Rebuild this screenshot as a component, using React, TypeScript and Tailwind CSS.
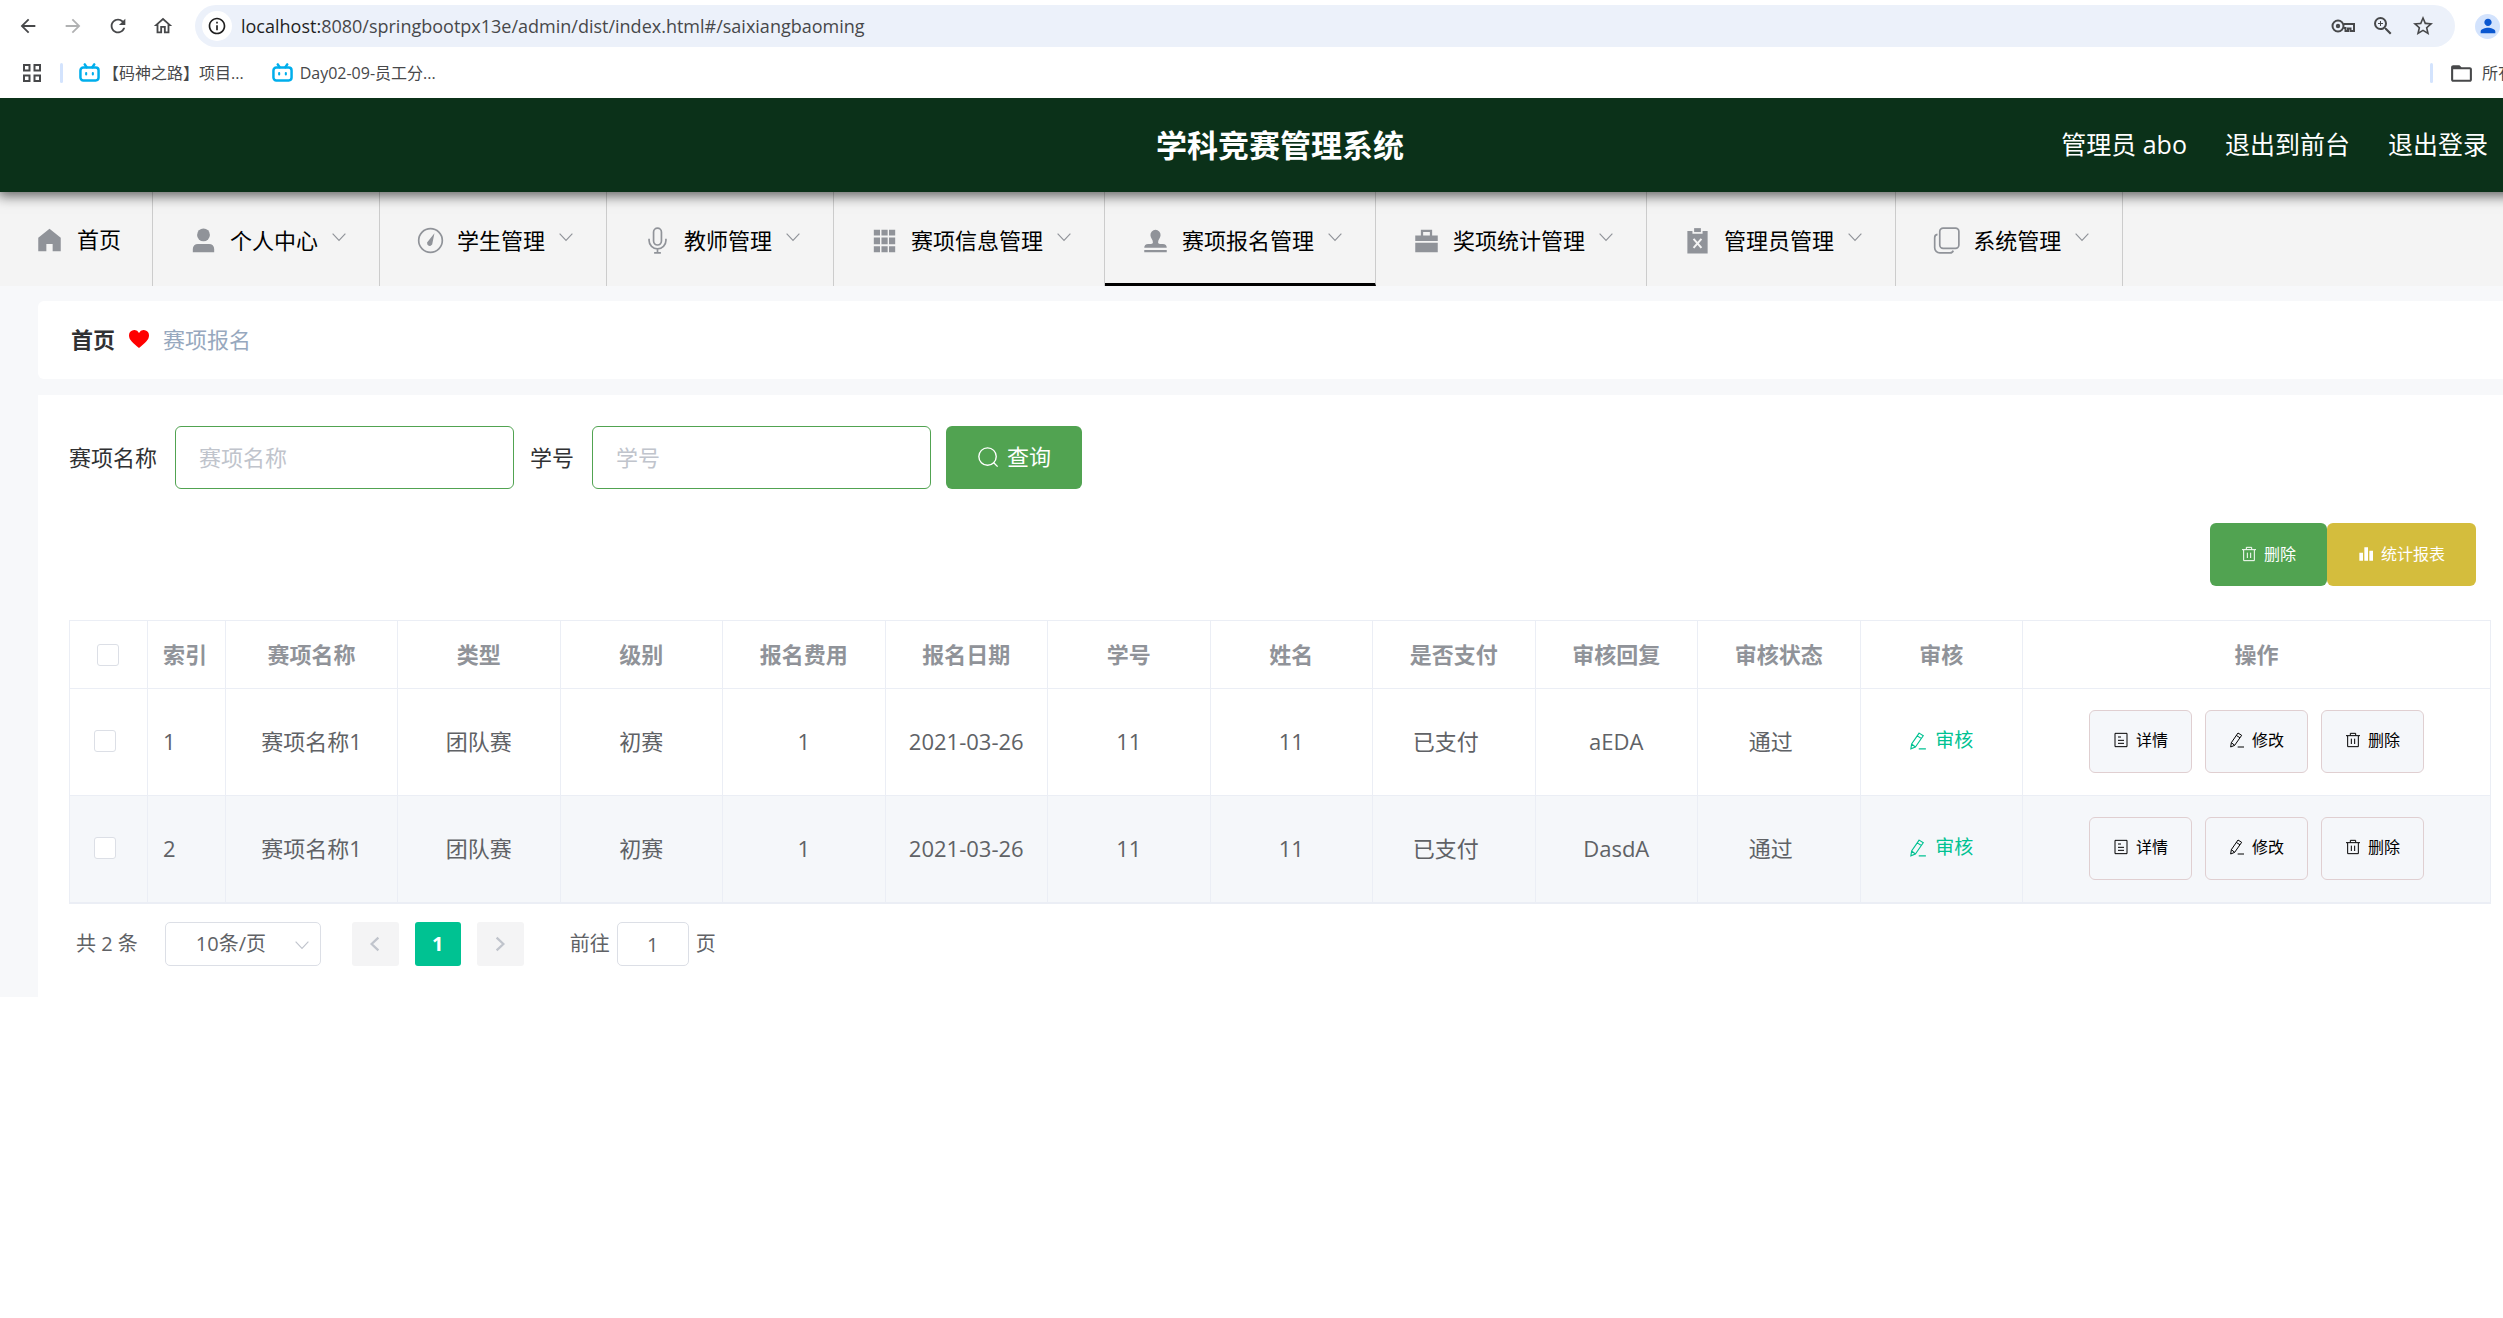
import { useState } from "react";
import type { ReactNode } from "react";
import {
  MdArrowBack,
  MdArrowForward,
  MdFolderOpen,
  MdInfoOutline,
  MdOutlineHome,
  MdPerson,
  MdRefresh,
  MdStarBorder,
  MdZoomIn,
} from "react-icons/md";

type IconProps = { className?: string };

function Icon({ className, children }: { className?: string; children: ReactNode }) {
  return (
    <svg viewBox="0 0 24 24" className={className} fill="none" stroke="currentColor" strokeWidth="1.5" aria-hidden="true">
      {children}
    </svg>
  );
}

function HomeIcon({ className }: IconProps) {
  return (
    <Icon className={className}>
      <path d="M12 2.500 2 10.500V22.500H9.200V16h5.600v6.500H22V10.500Z" fill="currentColor" stroke="none" />
    </Icon>
  );
}

function UserIcon({ className }: IconProps) {
  return (
    <Icon className={className}>
      <circle cx="12" cy="7" r="5.700" fill="currentColor" stroke="none" />
      <path d="M2.500 22.500v-3a4.500 4.500 0 0 1 4.500-4.500h10a4.500 4.500 0 0 1 4.500 4.500v3Z" fill="currentColor" stroke="none" />
    </Icon>
  );
}

function CompassIcon({ className }: IconProps) {
  return (
    <Icon className={className}>
      <circle cx="12" cy="12" r="10.500" />
      <path d="M15.500 5.500 13.800 14a2.500 2.500 0 0 1-4.600 1.600 2.500 2.500 0 0 1 .8-3.100Z" fill="currentColor" stroke="none" />
    </Icon>
  );
}

function MicIcon({ className }: IconProps) {
  return (
    <Icon className={className}>
      <rect x="8.500" y="1" width="7" height="15" rx="3.500" />
      <path d="M4.500 10.500v1.500a7.500 7.500 0 0 0 15 0v-1.500M12 19.500v3.500M9 23h6" />
    </Icon>
  );
}

function GridIcon({ className }: IconProps) {
  return (
    <Icon className={className}>
      <path
        d="M2.500 2.500h5.500v5H2.500zM9.300 2.500h5.500v5H9.300zM16 2.500h5.500v5H16zM2.500 9.300h5.500v6H2.500zM9.300 9.300h5.500v6H9.300zM16 9.300h5.500v6H16zM2.500 17h5.500v5.500H2.500zM9.300 17h5.500v5.500H9.300zM16 17h5.500v5.500H16z"
        fill="currentColor"
        stroke="none"
      />
    </Icon>
  );
}

function StampIcon({ className }: IconProps) {
  return (
    <Icon className={className}>
      <path
        d="M12 2.500a4.500 4.500 0 0 1 4.500 4.800c0 2.400-2.200 3.700-2.200 6.200 0 1 .7 1.500 1.700 1.500h2.500a3.500 3.500 0 0 1 3.500 3.500H2a3.500 3.500 0 0 1 3.500-3.500H8c1 0 1.700-.5 1.700-1.500 0-2.500-2.200-3.800-2.200-6.200A4.500 4.500 0 0 1 12 2.500ZM2 20.500h20v2H2z"
        fill="currentColor"
        stroke="none"
      />
    </Icon>
  );
}

function BriefcaseIcon({ className }: IconProps) {
  return (
    <Icon className={className}>
      <path
        d="M7 2.500h10v5h5v5H2v-5h5Zm2 2v3h6v-3ZM2 14h20v8.500H2z"
        fill="currentColor"
        fillRule="evenodd"
        stroke="none"
      />
    </Icon>
  );
}

function ClaimIcon({ className }: IconProps) {
  return (
    <Icon className={className}>
      <path d="M3 3.500h4.500v2.500h9V3.500H21v20H3z" fill="currentColor" stroke="none" />
      <path d="M9 1h6v3.500H9z" fill="currentColor" stroke="none" />
      <path d="m8.500 10.500 7 8m0-8-7 8" stroke="#f4f4f4" strokeWidth="1.800" />
    </Icon>
  );
}

function CopyIcon({ className }: IconProps) {
  return (
    <Icon className={className}>
      <rect x="6" y="1" width="17" height="18" rx="3" />
      <path d="M4 6.500A3 3 0 0 0 1.500 9.500v9A4.500 4.500 0 0 0 6 23h9a3 3 0 0 0 3-2" />
    </Icon>
  );
}

function ChevronDown({ className }: IconProps) {
  return (
    <Icon className={className}>
      <path d="m3.500 7.500 8.500 9 8.500-9" />
    </Icon>
  );
}

function TrashIcon({ className }: IconProps) {
  return (
    <Icon className={className}>
      <path d="M1.500 5.500h21M8 5V2h8v3M4 6v16h16V6M9.500 10v8M14.500 10v8" />
    </Icon>
  );
}

function PencilIcon({ className }: IconProps) {
  return (
    <Icon className={className}>
      <path d="m13.500 1.500 5.500 3.500L8.500 20 2.500 22.500 3.500 16ZM11 5.200l5.500 3.500M3.500 16l5 4M13 22.500h9.500" />
    </Icon>
  );
}

function DocIcon({ className }: IconProps) {
  return (
    <Icon className={className}>
      <path d="M3 2h18v20H3zM7.500 7.500H12M7.500 12.500h9M7.500 17h9" />
    </Icon>
  );
}

function SearchIcon({ className }: IconProps) {
  return (
    <Icon className={className}>
      <circle cx="11.500" cy="11.500" r="9.500" />
      <path d="m18 18 4.500 4.500" />
    </Icon>
  );
}

function ChartIcon({ className }: IconProps) {
  return (
    <Icon className={className}>
      <path d="M2 10h5.500v12H2zM9.500 2H15v20H9.500zM17 7h5.500v15H17z" fill="currentColor" stroke="none" />
    </Icon>
  );
}

function KeyIcon({ className }: IconProps) {
  return (
    <svg viewBox="0 0 24 14" className={className} fill="none" stroke="currentColor" strokeWidth="2" aria-hidden="true">
      <path d="M12.500 5H23v7h-3.500V9.500H17V12h-2.500V9h-2" />
      <circle cx="7" cy="7" r="5.500" />
      <circle cx="7" cy="7" r="2.200" fill="currentColor" stroke="none" />
    </svg>
  );
}

function TvIcon({ className }: IconProps) {
  return (
    <svg viewBox="0 0 22 20" className={className} fill="none" stroke="#00aeec" strokeWidth="2.600" strokeLinecap="round" aria-hidden="true">
      <path d="m6 1.500 2 3M16 1.500l-2 3" />
      <rect x="1.500" y="4.800" width="19" height="13.500" rx="3" />
      <path d="M7.500 10.500v1.500M14.500 10.500v1.500" strokeWidth="2.200" />
    </svg>
  );
}

function AppsIcon({ className }: IconProps) {
  return (
    <svg viewBox="0 0 18 18" className={className} fill="none" stroke="currentColor" strokeWidth="2" aria-hidden="true">
      <path d="M1 1h5.500v5.500H1zM11.500 1H17v5.500h-5.500zM1 11.500h5.500V17H1zM11.500 11.500H17V17h-5.500z" />
    </svg>
  );
}

const MENU = [
  { label: "个人中心", icon: UserIcon },
  { label: "学生管理", icon: CompassIcon },
  { label: "教师管理", icon: MicIcon },
  { label: "赛项信息管理", icon: GridIcon },
  { label: "赛项报名管理", icon: StampIcon, active: true },
  { label: "奖项统计管理", icon: BriefcaseIcon },
  { label: "管理员管理", icon: ClaimIcon },
  { label: "系统管理", icon: CopyIcon },
];

const COLUMNS = ["赛项名称", "类型", "级别", "报名费用", "报名日期", "学号", "姓名", "是否支付", "审核回复", "审核状态", "审核", "操作"];

const ROWS = [
  { id: 1, name: "赛项名称1", type: "团队赛", level: "初赛", fee: "1", date: "2021-03-26", no: "11", student: "11", paid: "已支付", reply: "aEDA", state: "通过" },
  { id: 2, name: "赛项名称1", type: "团队赛", level: "初赛", fee: "1", date: "2021-03-26", no: "11", student: "11", paid: "已支付", reply: "DasdA", state: "通过" },
];

const CHECKBOX =
  "block size-[22px] appearance-none rounded-[3px] border border-[#dcdfe6] bg-white checked:border-[#00c292] checked:bg-[#00c292]";

function BrowserBar() {
  return (
    <div className="relative z-10 h-[98px] bg-white text-[#47484a]">
      <div className="flex h-[52px] items-center pr-[60px] pl-[17px]">
        <nav className="flex gap-[23px]">
          <button aria-label="后退"><MdArrowBack className="size-[22px]" /></button>
          <button aria-label="前进" className="text-[#b0b1b2]"><MdArrowForward className="size-[22px]" /></button>
          <button aria-label="刷新"><MdRefresh className="size-[22px]" /></button>
          <button aria-label="主页"><MdOutlineHome className="size-[22px]" /></button>
        </nav>
        <div className="ml-[21px] flex h-[42px] flex-1 items-center rounded-full bg-[#ecf1fa] pr-5 pl-[7px]">
          <span className="flex size-[30px] items-center justify-center rounded-full bg-white">
            <MdInfoOutline className="size-5 text-[#1f1f1f]" />
          </span>
          <p className="ml-[9px] text-[18px] whitespace-nowrap">
            <span className="text-[#1f1f1f]">localhost:</span>8080/springbootpx13e/admin/dist/index.html#/saixiangbaoming
          </p>
          <div className="ml-auto flex items-center gap-4">
            <KeyIcon className="w-6" />
            <MdZoomIn className="size-6" />
            <MdStarBorder className="size-6" />
          </div>
        </div>
        <span className="ml-5 flex size-[25px] items-center justify-center rounded-full bg-[#d3e3fd] text-[#0b57d0]">
          <MdPerson className="size-[22px]" />
        </span>
      </div>
      <div className="flex h-[42px] items-center pl-[23px] text-base">
        <AppsIcon className="size-[18px]" />
        <span className="ml-[19px] h-5 w-[3px] rounded bg-[#d3e3fd]" />
        <a href="#mashen" className="ml-4 flex items-center">
          <TvIcon className="w-[21px]" />
          <span className="ml-[3px]">【码神之路】项目...</span>
        </a>
        <a href="#day02" className="ml-7 flex items-center gap-[7px]">
          <TvIcon className="w-[21px]" />
          Day02-09-员工分...
        </a>
        <div className="ml-auto flex items-center pr-[14px]">
          <span className="h-5 w-[3px] rounded bg-[#d3e3fd]" />
          <MdFolderOpen className="ml-4 size-[25px]" />
          <span className="ml-2">所有书签</span>
        </div>
      </div>
    </div>
  );
}

function MainMenu() {
  return (
    <nav className="flex h-[94px] bg-[#f4f4f4] text-[22px] text-black">
      <a href="#home" className="flex items-center border-r border-[#ccc] px-[31px]">
        <HomeIcon className="mr-3.5 ml-[5px] size-[27px] text-[#909399]" />
        首页
      </a>
      {MENU.map(({ label, icon: MenuIcon, active }) => (
        <a
          key={label}
          href={`#${label}`}
          className={`flex items-center border-r border-r-[#ccc] px-[31px] pt-0.5 ${active ? "border-b-3 border-b-black pt-[5px]" : ""}`}
        >
          <MenuIcon className="mr-[13px] ml-[6px] size-[27px] text-[#909399]" />
          {label}
          <ChevronDown className="mb-1.5 ml-3 size-[18px] text-[#909399]" />
        </a>
      ))}
    </nav>
  );
}

function ActionButton({ icon, label }: { icon: ReactNode; label: string }) {
  return (
    <button className="flex h-[63px] items-center gap-[7px] rounded-md border border-[#e0cfd1] bg-[#f5f7fa] px-[23px] pb-0.5 text-base text-black">
      {icon}
      {label}
    </button>
  );
}

function EntryTable() {
  return (
    <table className="w-full table-fixed border-separate border-spacing-0 border-t border-b border-l border-[#ebeef5] text-[22px] text-[#606266]">
      <colgroup>
        <col className="w-[78px]" />
        <col className="w-[78px]" />
        <col className="w-[172px]" />
        {COLUMNS.slice(1, -1).map((c) => <col key={c} />)}
        <col className="w-[468px]" />
      </colgroup>
      <thead>
        <tr className="h-[68px] text-[#909399] *:border-r *:border-b *:border-[#ebeef5]">
          <th className="pl-[27px]">
            <input type="checkbox" aria-label="全选" className={CHECKBOX} />
          </th>
          <th className="pl-[15px] text-left">索引</th>
          {COLUMNS.map((c) => <th key={c}>{c}</th>)}
        </tr>
      </thead>
      <tbody>
        {ROWS.map((row) => (
          <tr key={row.id} className="h-[107px] text-center even:bg-[#f5f7fa] *:border-r *:border-b *:border-[#ebeef5] *:pb-0.5">
            <td className="pl-6">
              <input type="checkbox" aria-label={`选择第${row.id}行`} className={CHECKBOX} />
            </td>
            <td className="pl-[15px] text-left">{row.id}</td>
            <td>{row.name}</td>
            <td>{row.type}</td>
            <td>{row.level}</td>
            <td>{row.fee}</td>
            <td>{row.date}</td>
            <td>{row.no}</td>
            <td>{row.student}</td>
            <td className="pr-4">{row.paid}</td>
            <td>{row.reply}</td>
            <td className="pr-4">{row.state}</td>
            <td>
              <button className="inline-flex items-center gap-2 text-[19px] text-[#00c292]">
                <PencilIcon className="size-[18px]" />
                审核
              </button>
            </td>
            <td>
              <div className="flex justify-center gap-[13px]">
                <ActionButton icon={<DocIcon className="size-4" />} label="详情" />
                <ActionButton icon={<PencilIcon className="size-4" />} label="修改" />
                <ActionButton icon={<TrashIcon className="size-4" />} label="删除" />
              </div>
            </td>
          </tr>
        ))}
      </tbody>
    </table>
  );
}

function Pagination() {
  const [page, setPage] = useState("1");

  return (
    <div className="flex items-center pt-[18px] pl-[7px] text-[20px] text-[#606266]">
      <span>共 2 条</span>
      <div className="relative ml-[27px]">
        <select
          aria-label="每页条数"
          className="h-11 w-[156px] appearance-none rounded-[5px] border border-[#dcdfe6] bg-white pl-[30px]"
        >
          <option>10条/页</option>
        </select>
        <ChevronDown className="pointer-events-none absolute top-3.5 right-2.5 size-[18px] text-[#c0c4cc]" />
      </div>
      <div className="ml-[31px] flex gap-4">
        <button aria-label="上一页" className="flex h-11 w-[47px] items-center justify-center rounded-[3px] bg-[#f4f4f5] text-[#c0c4cc]">
          <ChevronDown className="size-[18px] rotate-90 stroke-3" />
        </button>
        <button className="h-11 w-[46px] rounded-[3px] bg-[#00c292] font-bold text-white">1</button>
        <button aria-label="下一页" className="flex h-11 w-[47px] items-center justify-center rounded-[3px] bg-[#f4f4f5] text-[#c0c4cc]">
          <ChevronDown className="size-[18px] -rotate-90 stroke-3" />
        </button>
      </div>
      <label className="ml-[46px] flex items-center gap-[7px]">
        前往
        <input
          value={page}
          onChange={(e) => setPage(e.target.value)}
          className="h-11 w-[72px] rounded-[5px] border border-[#dcdfe6] bg-white text-center"
        />
        页
      </label>
    </div>
  );
}

export default function App() {
  return (
    <div className="overflow-hidden bg-white font-['Open_Sans','Noto_Sans_CJK_SC',sans-serif]">
      {/* the window is a little narrower than the page, so the right edge is cut off */}
      <div className="w-[calc(100%+57px)]">
        <BrowserBar />

        <header className="relative grid h-[94px] grid-cols-[1fr_auto_1fr] items-center bg-[#0b3119] text-white shadow-[0_2px_12px_2px_rgba(0,0,0,0.6)]">
          <h1 className="col-start-2 text-[31px] font-bold">学科竞赛管理系统</h1>
          <div className="flex justify-end gap-[38px] pr-[72px] text-[25px]">
            <span>管理员 abo</span>
            <a href="#front">退出到前台</a>
            <a href="#logout">退出登录</a>
          </div>
        </header>

        <MainMenu />

        <main className="bg-[#f7f8fa] px-[38px] pt-[15px]">
          <nav className="flex h-[78px] items-center rounded-md bg-white pb-0.5 pl-[33px] text-[22px]">
            <a href="#home" className="font-bold text-[#303133]">首页</a>
            <svg viewBox="0 0 20 18" className="mx-[14px] h-[18px] w-5" fill="#ff0000" aria-hidden="true">
              <path d="M10 18C4 13 0 10 0 5.500A5.300 5.300 0 0 1 10 3 5.300 5.300 0 0 1 20 5.500C20 10 16 13 10 18Z" />
            </svg>
            <span className="text-[#97a8be]">赛项报名</span>
          </nav>

          <section className="mt-4 bg-white px-[31px] pt-[31px] pb-[31px]">
            <form className="flex items-center text-[22px] text-[#303133]" onSubmit={(e) => e.preventDefault()}>
              <label htmlFor="name">赛项名称</label>
              <input
                id="name"
                placeholder="赛项名称"
                className="ml-[18px] h-[63px] w-[339px] rounded-md border border-[#51a351] px-[23px] pb-0.5 placeholder:text-[#c0c4cc]"
              />
              <label htmlFor="number" className="ml-4">学号</label>
              <input
                id="number"
                placeholder="学号"
                className="ml-[18px] h-[63px] w-[339px] rounded-md border border-[#51a351] px-[23px] pb-0.5 placeholder:text-[#c0c4cc]"
              />
              <button className="ml-[15px] flex h-[63px] items-center gap-2 rounded-md bg-[#51a351] px-[31px] pb-0.5 text-white">
                <SearchIcon className="size-[22px]" />
                查询
              </button>
            </form>

            <div className="mt-[34px] mb-[34px] flex justify-end pr-[15px] text-base text-white">
              <button className="flex h-[63px] items-center gap-[7px] rounded-md bg-[#51a351] px-[31px] pb-0.5">
                <TrashIcon className="size-4" />
                删除
              </button>
              <button className="flex h-[63px] items-center gap-[7px] rounded-md bg-[#d4bd3d] px-[31px] pb-0.5">
                <ChartIcon className="size-4" />
                统计报表
              </button>
            </div>

            <EntryTable />
            <Pagination />
          </section>
        </main>
      </div>
    </div>
  );
}
